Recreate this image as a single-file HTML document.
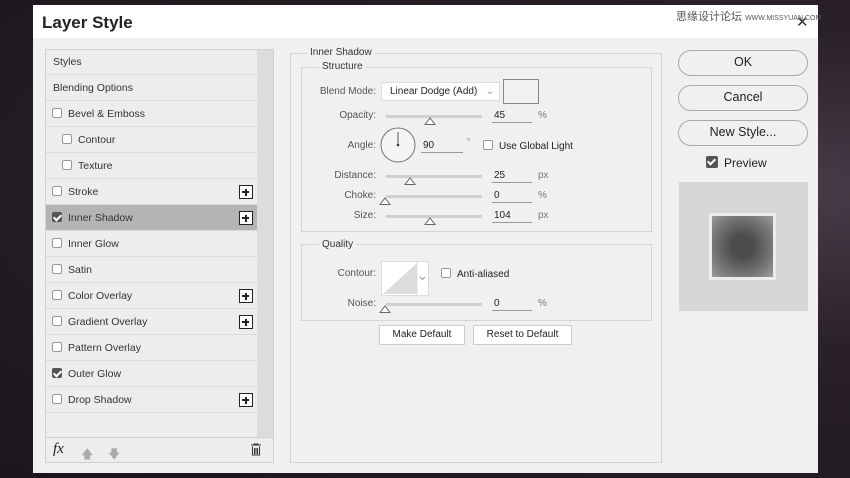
<!DOCTYPE html>
<html><head><meta charset="utf-8"><style>
*{margin:0;padding:0;box-sizing:border-box}
body{width:850px;height:478px;overflow:hidden;background:radial-gradient(ellipse at 92% 40%,#4a3c48 0%,#2a2029 40%,#1a161b 100%);font-family:"Liberation Sans",sans-serif;font-size:10.5px;color:#222;position:relative}
.a{position:absolute}
#dlg{left:33px;top:5px;width:785px;height:468px;background:#f0f0f0;}
#title{left:0;top:0;width:785px;height:33px;background:#fff;font-weight:bold;font-size:17px;padding:8px 0 0 9px;color:#222}
.row{position:absolute;left:13px;width:211px;height:26px;border-bottom:1px solid #dadada;line-height:26px;font-size:10.5px;color:#333}
.cb{display:inline-block;width:10px;height:10px;border:1px solid #999;background:#fff;border-radius:2px;vertical-align:-1px;margin-right:6px}
.cb.on{background:#555;border-color:#555;position:relative}
.cb.on:after{content:"";position:absolute;left:2px;top:0px;width:3px;height:6px;border:solid #fff;border-width:0 2px 2px 0;transform:rotate(45deg)}
.plus{position:absolute;right:4px;top:6px;width:14px;height:14px;border:1.5px solid #222;background:#fff}
.plus:before{content:"";position:absolute;left:2px;top:5px;width:7px;height:2px;background:#222}
.plus:after{content:"";position:absolute;left:4.5px;top:2.5px;width:2px;height:7px;background:#222}
.box{position:absolute;border:1px solid #d4d4d4}
.lg{position:absolute;background:#f0f0f0;padding:0 3px;font-size:10px;color:#333}
.lbl{position:absolute;text-align:right;width:80px;font-size:10px;color:#555}
.track{position:absolute;height:3px;background:#cfcfcf}
.thumb{position:absolute;width:12px;height:8px}
.inp{position:absolute;border-bottom:1px solid #999;font-size:10px;height:13px;padding-left:2px}
.unit{position:absolute;font-size:10px;color:#777}
.btn{position:absolute;border:1px solid #aaa;border-radius:13px;text-align:center;font-size:12.5px;color:#222;background:#f0f0f0;line-height:23px}
.sbtn{position:absolute;border:1px solid #ccc;background:#fff;text-align:center;font-size:10px;line-height:17px}
</style></head><body>
<div class="a" style="left:676px;top:8px;font-size:11px;color:#555;font-family:'Liberation Sans','Noto Sans CJK SC',sans-serif;z-index:5">思缘设计论坛 <span style="font-size:7px">WWW.MISSYUAN.COM</span></div>
<div id="dlg" class="a">
<div id="title" class="a">Layer Style</div>
<div class="a" style="left:763px;top:8px;font-size:15px;color:#333">✕</div>
<div class="a" style="left:12px;top:44px;width:229px;height:414px;border:1px solid #d0d0d0;background:#ededed"></div>
<div class="a" style="left:224px;top:45px;width:16px;height:387px;background:#dcdcdc"></div>
<div class="row" style="top:44px;padding-left:7px">Styles</div>
<div class="row" style="top:70px;padding-left:7px">Blending Options</div>
<div class="row" style="top:96px;padding-left:6px"><span class="cb"></span>Bevel &amp; Emboss</div>
<div class="row" style="top:122px;padding-left:16px"><span class="cb"></span>Contour</div>
<div class="row" style="top:148px;padding-left:16px"><span class="cb"></span>Texture</div>
<div class="row" style="top:174px;padding-left:6px"><span class="cb"></span>Stroke<span class="plus"></span></div>
<div class="row" style="top:200px;padding-left:6px;background:#b4b4b4"><span class="cb on"></span>Inner Shadow<span class="plus"></span></div>
<div class="row" style="top:226px;padding-left:6px"><span class="cb"></span>Inner Glow</div>
<div class="row" style="top:252px;padding-left:6px"><span class="cb"></span>Satin</div>
<div class="row" style="top:278px;padding-left:6px"><span class="cb"></span>Color Overlay<span class="plus"></span></div>
<div class="row" style="top:304px;padding-left:6px"><span class="cb"></span>Gradient Overlay<span class="plus"></span></div>
<div class="row" style="top:330px;padding-left:6px"><span class="cb"></span>Pattern Overlay</div>
<div class="row" style="top:356px;padding-left:6px"><span class="cb on"></span>Outer Glow</div>
<div class="row" style="top:382px;padding-left:6px"><span class="cb"></span>Drop Shadow<span class="plus"></span></div>
<div class="a" style="left:12px;top:432px;width:229px;border-top:1px solid #d0d0d0"></div>
<div class="a" style="left:20px;top:436px;font-family:'Liberation Serif',serif;font-style:italic;font-size:15px">fx</div>
<div class="a" style="left:48px;top:440px;color:#aaa;font-size:12px">🡅</div>
<div class="a" style="left:75px;top:440px;color:#aaa;font-size:12px">🡇</div>
<svg class="a" style="left:217px;top:438px" width="12" height="13"><path d="M1 2h10M4 2V1h4v1M2.5 3.5v8.5h7V3.5M4.5 5v6M6 5v6M7.5 5v6" stroke="#333" fill="none"/></svg>
<div class="box" style="left:257px;top:48px;width:372px;height:410px"></div>
<div class="lg" style="left:274px;top:42px">Inner Shadow</div>
<div class="box" style="left:268px;top:62px;width:351px;height:165px"></div>
<div class="lg" style="left:286px;top:56px">Structure</div>
<div class="lbl" style="left:263px;top:81px">Blend Mode:</div>
<div class="a" style="left:348px;top:77px;width:119px;height:19px;background:#fff;border:1px solid #ddd;font-size:10px;padding:3px 0 0 8px">Linear Dodge (Add)<span style="position:absolute;right:5px;color:#999">⌄</span></div>
<div class="a" style="left:470px;top:74px;width:36px;height:25px;border:1px solid #888;background:#f2f2f2"></div>
<div class="lbl" style="left:263px;top:105px">Opacity:</div>
<div class="track" style="left:353px;top:110px;width:96px"></div>
<svg class="thumb" style="left:391px;top:112px"><path d="M1 7.5L6 1 11 7.5Z" fill="#fff" stroke="#666"/></svg>
<div class="inp" style="left:459px;top:105px;width:40px">45</div><div class="unit" style="left:505px;top:105px">%</div>
<div class="lbl" style="left:263px;top:135px">Angle:</div>
<svg class="a" style="left:347px;top:122px" width="36" height="36"><circle cx="18" cy="18" r="17" fill="#f5f5f5" stroke="#777"/><path d="M18 18V5" stroke="#555"/><circle cx="18" cy="18" r="1.3" fill="#333"/></svg>
<div class="inp" style="left:388px;top:135px;width:42px">90</div><div class="unit" style="left:434px;top:132px;font-size:8px">°</div>
<div class="a" style="left:450px;top:135px;font-size:10px"><span class="cb"></span>Use Global Light</div>
<div class="lbl" style="left:263px;top:165px">Distance:</div>
<div class="track" style="left:353px;top:170px;width:96px"></div>
<svg class="thumb" style="left:371px;top:172px"><path d="M1 7.5L6 1 11 7.5Z" fill="#fff" stroke="#666"/></svg>
<div class="inp" style="left:459px;top:165px;width:40px">25</div><div class="unit" style="left:505px;top:165px">px</div>
<div class="lbl" style="left:263px;top:185px">Choke:</div>
<div class="track" style="left:353px;top:190px;width:96px"></div>
<svg class="thumb" style="left:346px;top:192px"><path d="M1 7.5L6 1 11 7.5Z" fill="#fff" stroke="#666"/></svg>
<div class="inp" style="left:459px;top:185px;width:40px">0</div><div class="unit" style="left:505px;top:185px">%</div>
<div class="lbl" style="left:263px;top:205px">Size:</div>
<div class="track" style="left:353px;top:210px;width:96px"></div>
<svg class="thumb" style="left:391px;top:212px"><path d="M1 7.5L6 1 11 7.5Z" fill="#fff" stroke="#666"/></svg>
<div class="inp" style="left:459px;top:205px;width:40px">104</div><div class="unit" style="left:505px;top:205px">px</div>
<div class="box" style="left:268px;top:239px;width:351px;height:77px"></div>
<div class="lg" style="left:286px;top:234px">Quality</div>
<div class="lbl" style="left:263px;top:263px">Contour:</div>
<svg class="a" style="left:348px;top:256px" width="48" height="35"><rect x="0.5" y="0.5" width="47" height="34" fill="#fff" stroke="#ddd"/><path d="M2 33L36 2V33Z" fill="#ddd"/><path d="M36 1V34" stroke="#ddd"/><path d="M39 16l2.5 2.5 2.5-2.5" stroke="#999" fill="none"/></svg>
<div class="a" style="left:408px;top:263px;font-size:10px"><span class="cb"></span>Anti-aliased</div>
<div class="lbl" style="left:263px;top:293px">Noise:</div>
<div class="track" style="left:353px;top:298px;width:96px"></div>
<svg class="thumb" style="left:346px;top:300px"><path d="M1 7.5L6 1 11 7.5Z" fill="#fff" stroke="#666"/></svg>
<div class="inp" style="left:459px;top:293px;width:40px">0</div><div class="unit" style="left:505px;top:293px">%</div>
<div class="sbtn" style="left:346px;top:320px;width:86px;height:20px">Make Default</div>
<div class="sbtn" style="left:440px;top:320px;width:99px;height:20px">Reset to Default</div>
<div class="btn" style="left:645px;top:45px;width:130px;height:26px">OK</div>
<div class="btn" style="left:645px;top:80px;width:130px;height:26px">Cancel</div>
<div class="btn" style="left:645px;top:115px;width:130px;height:26px">New Style...</div>
<div class="a" style="left:673px;top:151px;font-size:12px"><span class="cb on" style="width:12px;height:12px"></span>Preview</div>
<div class="a" style="left:646px;top:177px;width:129px;height:129px;background:#d6d6d6"></div>
<div class="a" style="left:676px;top:208px;width:67px;height:67px;background:#ebebeb"><div style="margin:3px;width:61px;height:61px;background:radial-gradient(circle,#4e4b4f 25%,#7a777a 70%,#9e9c9e 100%)"></div></div>
</div>
</body></html>
